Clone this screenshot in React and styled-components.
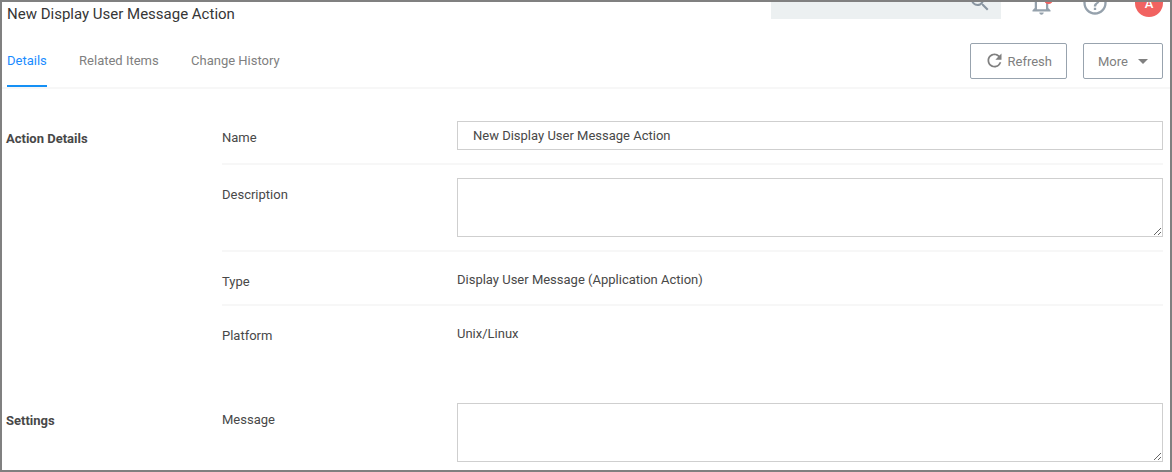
import React from "react";
import styled, { createGlobalStyle } from "styled-components";
import { MdSearch, MdNotificationsNone, MdHelpOutline, MdRefresh, MdArrowDropDown } from "react-icons/md";

const GlobalStyle = createGlobalStyle`
  *, *::before, *::after { box-sizing: border-box; }
  body { margin: 0; background: #fff; font-family: Roboto, "Liberation Sans", sans-serif; font-size: 13px; color: #484848; }
`;

const Frame = styled.div`
  width: 1172px;
  height: 472px;
  border: 2px solid #808080;
  background: #fff;
  overflow: hidden;
`;

const Header = styled.header`
  display: flex;
  justify-content: space-between;
  height: 32px;
  padding: 0 7px 0 5px;
`;

const Title = styled.h1`
  margin: 0;
  padding-top: 2px;
  font-size: 15px;
  font-weight: 400;
  line-height: 20px;
  color: #363636;
`;

const Tools = styled.div`
  display: flex;
  align-items: center;
  height: 34px;
  margin-top: -17px;
  color: #95a1ac;
`;

const SearchBox = styled.div`
  display: flex;
  align-items: center;
  justify-content: flex-end;
  width: 230px;
  height: 34px;
  padding-right: 9px;
  background: #ecf0f1;
  color: #8995a0;
`;

const BellButton = styled.div`
  position: relative;
  display: flex;
  width: 27px;
  height: 27px;
  margin: 2px 0 0 27px;
`;

const BellBadge = styled.span`
  position: absolute;
  top: 5px;
  right: 2px;
  width: 9px;
  height: 9px;
  border-radius: 50%;
  background: #f16361;
`;

const HelpButton = styled.div`
  display: flex;
  margin: 2px 0 0 26px;
`;

const Avatar = styled.div`
  width: 28px;
  height: 28px;
  margin: 2px 0 0 26px;
  border-radius: 50%;
  background: #f16361;
  color: #fff;
  font-size: 13px;
  font-weight: 500;
  line-height: 29px;
  text-align: center;
`;

const Toolbar = styled.nav`
  display: flex;
  justify-content: space-between;
  height: 55px;
  padding: 0 7px 0 5px;
  border-bottom: 2px solid #f7f7f7;
`;

const Tabs = styled.div`
  display: flex;
  gap: 32.3px;
`;

const Tab = styled.span`
  height: 53px;
  padding-top: 19px;
  line-height: 16px;
  color: ${(p) => (p.$active ? "#1a8cff" : "#808080")};
  border-bottom: 2px solid ${(p) => (p.$active ? "#1590f5" : "transparent")};
`;

const Actions = styled.div`
  display: flex;
  gap: 16px;
  padding-top: 9px;
`;

const Button = styled.button`
  display: flex;
  align-items: center;
  width: ${(p) => p.$width}px;
  height: 36px;
  padding: 1px 0 0 14px;
  border: 1px solid #98a3ae;
  border-radius: 2px;
  background: #fff;
  color: #808080;
  font: inherit;
`;

const RefreshIcon = styled(MdRefresh)`
  margin: -2px 3px 0 -1.5px;
`;

const CaretIcon = styled(MdArrowDropDown)`
  margin: -2px 0 0 3px;
`;

const Section = styled.section`
  display: flex;
  height: ${(p) => p.$height}px;
  padding: 0 7px 0 4px;
`;

const SectionTitle = styled.h2`
  width: 216px;
  margin: 0;
  padding-top: 23px;
  font-size: 13px;
  font-weight: 700;
  line-height: 16px;
`;

const Fields = styled.div`
  flex: 1;
`;

const Row = styled.div`
  display: flex;
  padding: 13px 0;
  border-bottom: ${(p) => (p.$last ? "0" : "2px solid #f7f7f7")};
`;

const Label = styled.label`
  width: 235px;
  padding-top: 9px;
  line-height: 16px;
`;

const Value = styled.span`
  height: 26px;
  padding-top: 7px;
  line-height: 16px;
`;

const Input = styled.input`
  flex: 1;
  height: 29px;
  padding: 0 15px;
  border: 1px solid #cfcfcf;
  background: #fff;
  color: #484848;
  font: inherit;
`;

const TextArea = styled.textarea`
  display: block;
  flex: 1;
  height: 59px;
  border: 1px solid #cfcfcf;
  background: #fff;
  font: inherit;
`;

const Content = styled.main`
  padding-top: 19px;
`;

export default function App() {
  return (
    <>
      <GlobalStyle />
      <Frame>
        <Header>
          <Title>New Display User Message Action</Title>
          <Tools>
            <SearchBox><MdSearch size={24} /></SearchBox>
            <BellButton>
              <MdNotificationsNone size={27} />
              <BellBadge />
            </BellButton>
            <HelpButton><MdHelpOutline size={28} /></HelpButton>
            <Avatar>A</Avatar>
          </Tools>
        </Header>
        <Toolbar>
          <Tabs>
            <Tab $active>Details</Tab>
            <Tab>Related Items</Tab>
            <Tab>Change History</Tab>
          </Tabs>
          <Actions>
            <Button $width={97}><RefreshIcon size={21} />Refresh</Button>
            <Button $width={80}>More<CaretIcon size={24} /></Button>
          </Actions>
        </Toolbar>
        <Content>
          <Section $height={282}>
            <SectionTitle>Action Details</SectionTitle>
            <Fields>
              <Row>
                <Label htmlFor="name">Name</Label>
                <Input id="name" defaultValue="New Display User Message Action" />
              </Row>
              <Row>
                <Label htmlFor="description">Description</Label>
                <TextArea id="description" />
              </Row>
              <Row>
                <Label as="span">Type</Label>
                <Value>Display User Message (Application Action)</Value>
              </Row>
              <Row $last>
                <Label as="span">Platform</Label>
                <Value>Unix/Linux</Value>
              </Row>
            </Fields>
          </Section>
          <Section $height={80}>
            <SectionTitle>Settings</SectionTitle>
            <Fields>
              <Row $last>
                <Label htmlFor="message">Message</Label>
                <TextArea id="message" />
              </Row>
            </Fields>
          </Section>
        </Content>
      </Frame>
    </>
  );
}
